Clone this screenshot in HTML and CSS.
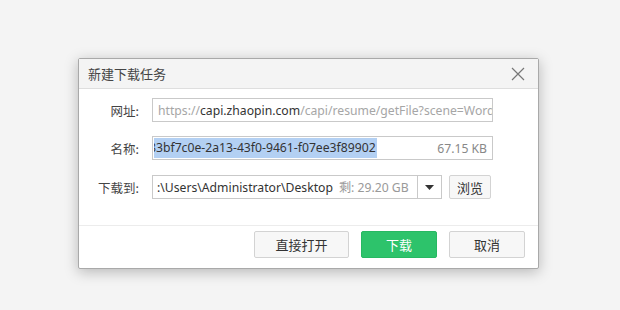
FILE: index.html
```html
<!DOCTYPE html>
<html lang="zh-CN">
<head>
<meta charset="utf-8">
<title>新建下载任务</title>
<link rel="stylesheet" href="styles.css">
</head>
<body>
<div class="dialog">
  <div class="titlebar">
    <span class="title">新建下载任务</span>
    <svg class="close" width="14" height="14" viewBox="0 0 14 14"><path d="M1 1 L13 13 M13 1 L1 13" stroke="#777" stroke-width="1.2" fill="none"/></svg>
  </div>
  <div class="content">
    <div class="row">
      <label class="label">网址:</label>
      <div class="field url"><span class="muted">https://</span><span class="strong">capi.zhaopin.com</span><span class="muted">/capi/resume/getFile?scene=Word</span></div>
    </div>
    <div class="row row-name">
      <label class="label">名称:</label>
      <div class="field name"><span class="sel"><span class="sel-text">83bf7c0e-2a13-43f0-9461-f07ee3f89902</span></span><span class="size">67.15 KB</span></div>
    </div>
    <div class="row row-path">
      <label class="label">下载到:</label>
      <div class="field path">
        <div class="path-text"><span class="strong">:\Users\Administrator\Desktop</span><span class="free">剩: 29.20 GB</span></div>
        <div class="drop"><svg width="9" height="5" viewBox="0 0 9 5"><path d="M0 0 H9 L4.5 5 Z" fill="#333"/></svg></div>
      </div>
      <button class="btn browse">浏览</button>
    </div>
  </div>
  <div class="footer">
    <button class="btn open">直接打开</button>
    <button class="btn primary">下载</button>
    <button class="btn cancel">取消</button>
  </div>
</div>
</body>
</html>
```
FILE: styles.css
```css
* { box-sizing: border-box; }
html, body { margin: 0; padding: 0; }
body {
  background: #f4f4f4;
  width: 620px;
  height: 310px;
  overflow: hidden;
  font-family: "Noto Sans", "Noto Sans CJK SC", sans-serif;
  font-size: 13px;
  color: #333;
}
.dialog {
  margin: 58px 0 0 78px;
  width: 461px;
  height: 211px;
  background: #fff;
  border: 1px solid #a9a9a9;
  border-radius: 2px;
  box-shadow: 0 3px 14px rgba(0,0,0,0.25);
  display: flex;
  flex-direction: column;
}
.titlebar {
  height: 30px;
  background: #f4f4f4;
  border-bottom: 1px solid #dedede;
  display: flex;
  align-items: center;
  justify-content: space-between;
  padding: 0 13px 0 9px;
}
.title {
  font-family: "Noto Sans CJK SC", sans-serif;
  font-size: 13px;
  color: #444;
}
.close { display: block; }
.content {
  padding: 9px 0 0 0;
  flex: 1;
}
.row {
  display: flex;
  align-items: center;
  height: 24px;
}
.row-name { margin-top: 14px; }
.row-path { margin-top: 15px; }
.label {
  width: 60px;
  margin-right: 13px;
  text-align: right;
  font-family: "Noto Sans CJK SC", sans-serif;
  font-size: 12.5px;
  color: #444;
}
.field {
  height: 24px;
  border: 1px solid #c9c9c9;
  background: #fff;
  display: flex;
  align-items: center;
  white-space: nowrap;
  overflow: hidden;
  font-size: 12.2px;
}
.url {
  width: 341px;
  padding-left: 5px;
}
.muted { color: #a6a6a6; }
.strong { color: #333; }
.name {
  width: 341px;
  padding: 0 5px 0 1px;
  justify-content: space-between;
}
.sel {
  background: #b3d0f3;
  color: #333;
  line-height: 20px;
  overflow: hidden;
  padding-right: 1px;
  display: block;
}
.sel-text {
  display: block;
  margin-left: -5px;
}
.size { color: #888; }
.path {
  width: 290px;
  padding-left: 4px;
}
.path-text {
  flex: 1;
  display: flex;
  align-items: center;
  overflow: hidden;
}
.free {
  color: #999;
  margin-left: 6px;
}
.drop {
  width: 24px;
  height: 22px;
  border-left: 1px solid #c9c9c9;
  display: flex;
  align-items: center;
  justify-content: center;
}
.btn {
  font-family: "Noto Sans CJK SC", sans-serif;
  font-size: 13px;
  color: #333;
  background: #f7f7f7;
  border: 1px solid #d3d3d3;
  border-radius: 2px;
  padding: 0;
  cursor: pointer;
}
.browse {
  margin-left: 7px;
  width: 42px;
  height: 24px;
}
.footer {
  border-top: 1px solid #ececec;
  height: 43px;
  display: flex;
  align-items: flex-start;
  justify-content: flex-end;
  gap: 12px;
  padding: 5px 13px 0 0;
}
.footer .btn { height: 27px; }
.open { width: 95px; }
.primary {
  width: 76px;
  background: #2dc36b;
  border-color: #27b862;
  color: #fff;
}
.cancel { width: 76px; }
```
